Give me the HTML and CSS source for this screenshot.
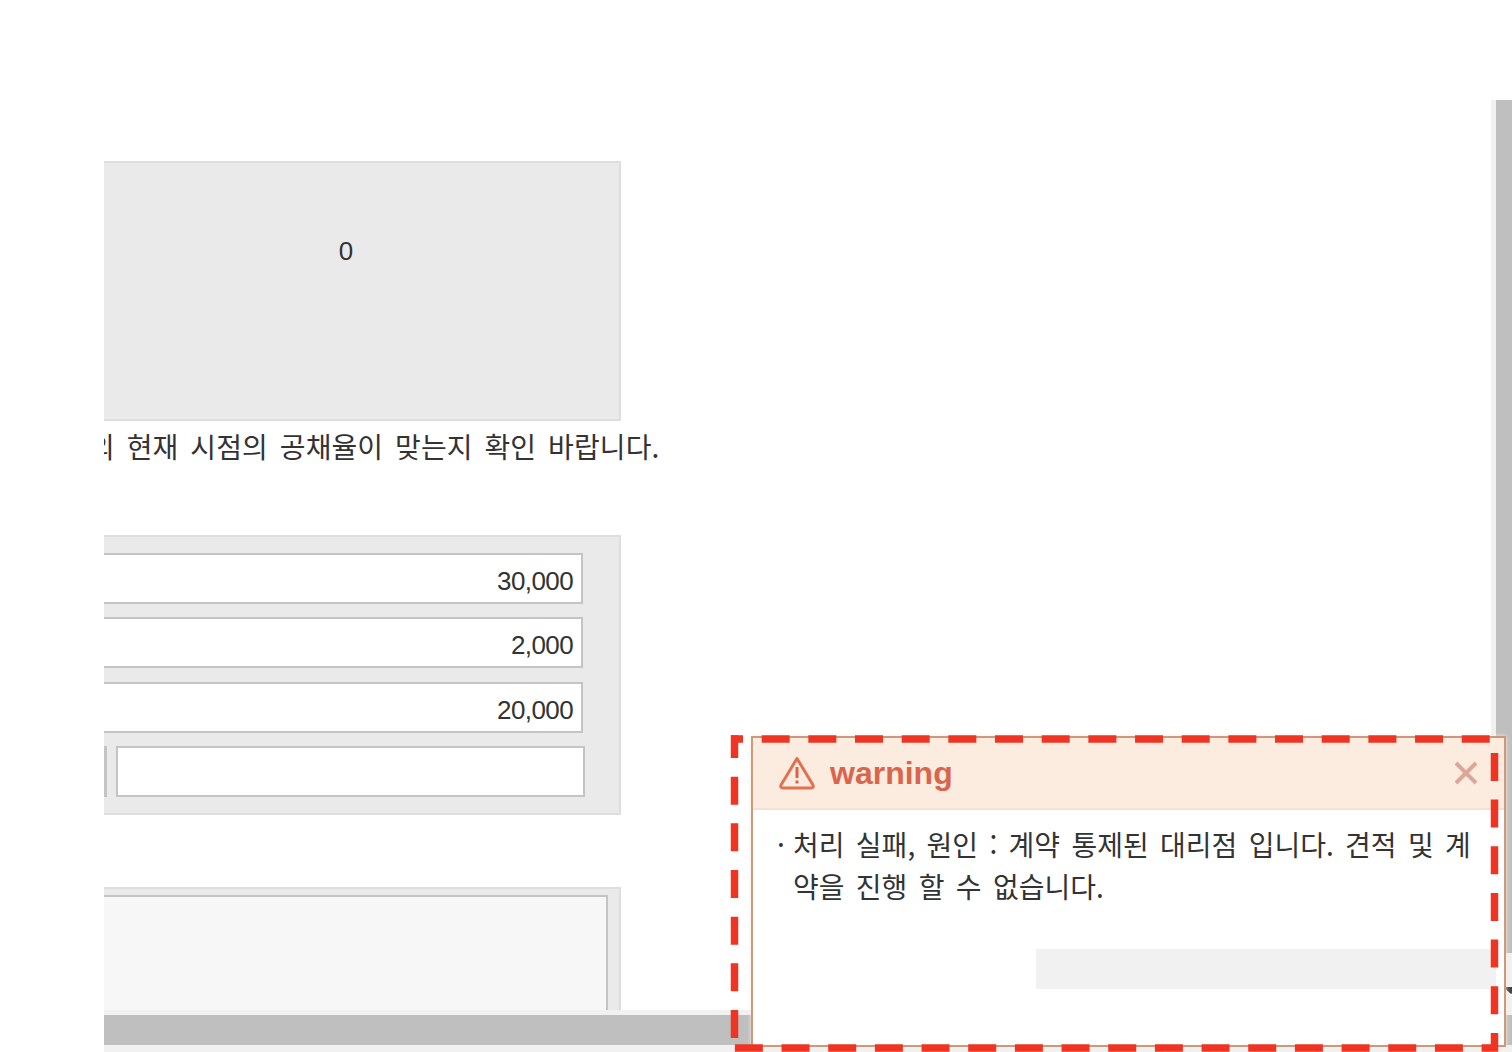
FILE: index.html
```html
<!DOCTYPE html>
<html lang="ko">
<head>
  <meta charset="UTF-8" />
  <title>공채율 확인</title>
  <link rel="stylesheet" href="styles.css">
</head>
<body>

  <div class="content">
    <div class="rate-box">0</div>
    <p class="rate-note">의 현재 시점의 공채율이 맞는지 확인 바랍니다.</p>

    <div class="amount-panel">
      <div class="amount-input">30,000</div>
      <div class="amount-input">2,000</div>
      <div class="amount-input">20,000</div>
      <div class="amount-row">
        <span class="amount-stub"></span>
        <div class="amount-input wide"></div>
      </div>
    </div>

    <div class="memo-panel">
      <div class="memo-input"></div>
    </div>
  </div>

  <div class="scroll-x"><div class="scroll-x-thumb"></div></div>

  <div class="scroll-y">
    <div class="scroll-y-thumb"></div>
    <div class="scroll-y-arrow"></div>
  </div>

  <div class="dialog">
    <div class="dialog-head">
      <svg class="warn-icon" viewBox="0 0 36 34" fill="none">
        <path d="M18 2.5 L34 29 Q35 32 32 32 L4 32 Q1 32 2 29 Z" stroke="#e2714f" stroke-width="3" stroke-linejoin="round"/>
        <path d="M18 11 V22" stroke="#d9634a" stroke-width="3"/>
        <path d="M18 24.5 V27.5" stroke="#d9634a" stroke-width="3"/>
      </svg>
      <span class="dialog-title">warning</span>
      <svg class="close-icon" viewBox="0 0 24 24" fill="none">
        <path d="M2 2 L22 22 M22 2 L2 22" stroke="#dca797" stroke-width="4"/>
      </svg>
    </div>
    <div class="dialog-body">
      <span class="dialog-dot">·</span>
      <p class="dialog-msg">처리 실패, 원인 : 계약 통제된 대리점 입니다. 견적 및 계약을 진행 할 수 없습니다.</p>
    </div>
    <div class="dialog-foot"></div>
  </div>

  <!-- red dashed mark around the dialog -->
  <svg class="dash-mark" viewBox="0 0 1512 1052" fill="none" stroke="#ee3524" stroke-width="7.5" stroke-dasharray="28 18.67">
    <path d="M731 739 H1494.5 V1048 H734" stroke-dashoffset="16"/>
    <path d="M734.5 1038 V735.25"/>
  </svg>

</body>
</html>
```

FILE: styles.css
```css
:root {
  --panel: #eaeaea;
  --panel-line: #dedede;
  --input-line: #c4c4c4;
  --bar: #bfbfbf;
  --text-color: #333333;
}

* {
  margin: 0;
  padding: 0;
  box-sizing: border-box;
}

body {
  position: relative;
  width: 1512px;
  height: 1052px;
  overflow: hidden;
  background-color: #fff;
  color: var(--text-color);
  font-family: "Noto Sans CJK KR", "Liberation Sans", sans-serif;
}

.content {
  width: 640px;
  height: 1052px;
  margin-left: 104px;
  padding-top: 161px;
  overflow: hidden;
}

.rate-box {
  width: 517px;
  height: 260px;
  padding: 71px 31px 0 0;
  text-align: center;
  font-family: "Liberation Sans", sans-serif;
  font-size: 26px;
  line-height: 34px;
  background-color: var(--panel);
  border: 2px solid var(--panel-line);
  border-left: none;
}

.rate-note {
  margin: 8px 0 0 -15px;
  height: 37px;
  font-size: 28px;
  line-height: 34px;
  letter-spacing: 0.08px;
  word-spacing: 4px;
  white-space: nowrap;
}

.amount-panel {
  display: flex;
  flex-direction: column;
  gap: 13.3px;
  width: 517px;
  height: 280px;
  margin-top: 69px;
  padding: 16px 36px 0 0;
  background-color: var(--panel);
  border: 2px solid var(--panel-line);
  border-left: none;
}

.amount-input {
  height: 51px;
  padding-right: 8px;
  text-align: right;
  font-family: "Liberation Sans", sans-serif;
  font-size: 26px;
  line-height: 52px;
  letter-spacing: -0.6px;
  background-color: #fff;
  border: 2px solid var(--input-line);
  border-left: none;
}

.amount-row {
  display: flex;
  gap: 9px;
  margin-right: -2px;
}

.amount-stub {
  width: 3px;
  height: 51px;
  background-color: var(--input-line);
}

.amount-input.wide {
  flex: 1;
  border-left: 2px solid var(--input-line);
}

.memo-panel {
  width: 517px;
  height: 200px;
  margin-top: 72px;
  padding: 6px 11px 0 0;
  background-color: var(--panel);
  border: 2px solid var(--panel-line);
  border-left: none;
}

.memo-input {
  height: 180px;
  background-color: #f7f7f7;
  border: 2px solid var(--input-line);
  border-left: none;
}

.scroll-x {
  position: absolute;
  left: 104px;
  top: 1010px;
  width: 1408px;
  height: 42px;
  padding: 5px 0 2px;
  background-color: #f1f1f1;
}

.scroll-x-thumb {
  height: 30px;
  background-color: var(--bar);
}

.scroll-y {
  position: absolute;
  left: 1491px;
  top: 100px;
  width: 21px;
  height: 910px;
  padding-left: 5px;
  overflow: hidden;
  background-color: #f1f1f1;
}

.scroll-y-thumb {
  height: 853px;
  background-color: var(--bar);
}

.scroll-y-arrow {
  width: 0;
  height: 0;
  margin: 34px 0 0 7px;
  border-top: 7px solid #444;
  border-left: 8px solid transparent;
  border-right: 8px solid transparent;
}

.dialog {
  position: absolute;
  left: 751px;
  top: 736px;
  width: 755px;
  height: 311px;
  background-color: #fff;
  border: 2px solid #c99a7c;
  box-shadow: 0 0 4px #fbeadd;
}

.dialog-head {
  display: flex;
  align-items: center;
  height: 72px;
  padding: 0 26px;
  background-color: #fcebdf;
  border-bottom: 2px solid #f3e1d5;
}

.warn-icon {
  width: 36px;
  height: 34px;
  margin-right: 15px;
}

.dialog-title {
  flex: 1;
  font-family: "Liberation Sans", sans-serif;
  font-size: 32px;
  font-weight: 700;
  color: #d9654c;
}

.close-icon {
  width: 24px;
  height: 24px;
}

.dialog-body {
  display: flex;
  height: 139px;
  padding: 13px 28px 0 24px;
  font-size: 28px;
  line-height: 42px;
  letter-spacing: 0;
  word-spacing: 3.5px;
}

.dialog-dot {
  width: 16px;
  flex-shrink: 0;
}

.dialog-msg {
  flex: 1;
  word-break: break-all;
}

.dialog-foot {
  width: 460px;
  height: 40px;
  margin-left: 283px;
  background-color: #f1f1f1;
}

.dash-mark {
  position: absolute;
  left: 0;
  top: 0;
  width: 1512px;
  height: 1052px;
  pointer-events: none;
}
```
